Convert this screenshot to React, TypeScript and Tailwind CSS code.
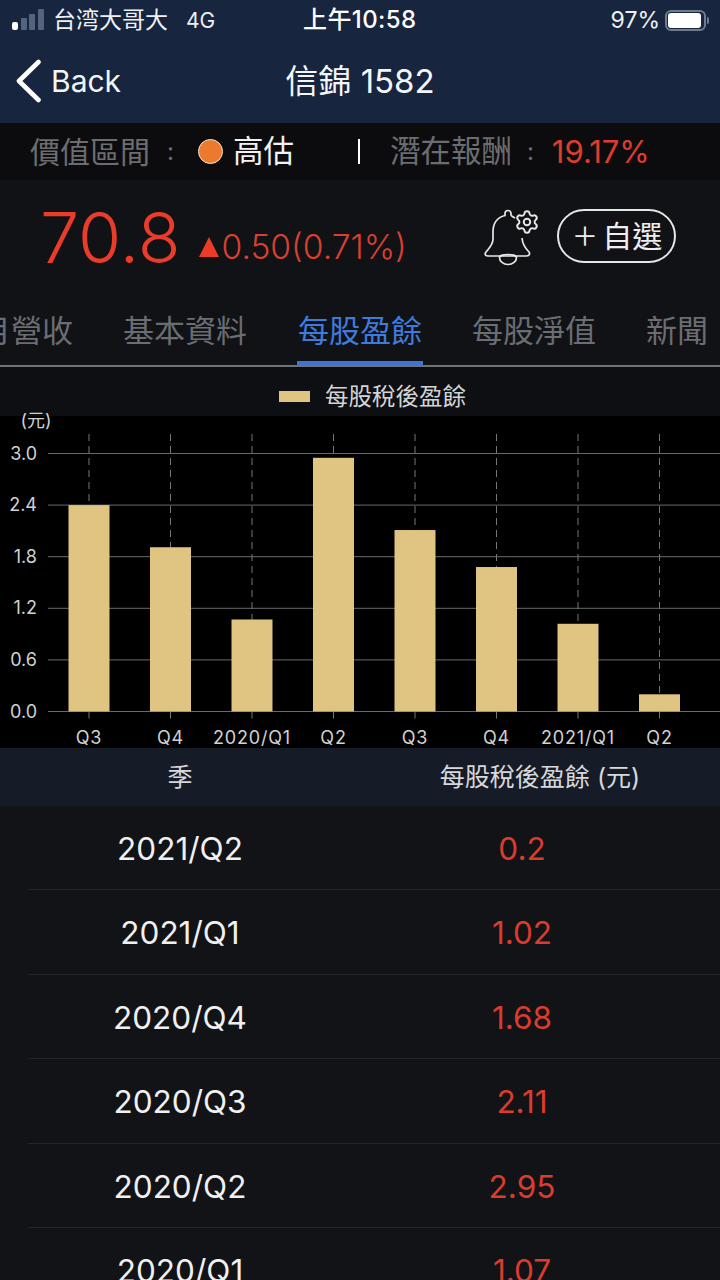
import React from "react";
import { Settings } from "lucide-react";

const FONT = 'Inter, "Noto Sans CJK TC", sans-serif';

const bars = [
  { label: "Q3", x: 89, value: 2.4 },
  { label: "Q4", x: 170.5, value: 1.91 },
  { label: "2020/Q1", x: 252, value: 1.07 },
  { label: "Q2", x: 333.5, value: 2.95 },
  { label: "Q3", x: 415, value: 2.11 },
  { label: "Q4", x: 496.5, value: 1.68 },
  { label: "2021/Q1", x: 578, value: 1.02 },
  { label: "Q2", x: 659.5, value: 0.2 },
];

const ticks = ["0.0", "0.6", "1.2", "1.8", "2.4", "3.0"];

const rows = [
  { season: "2021/Q2", eps: "0.2" },
  { season: "2021/Q1", eps: "1.02" },
  { season: "2020/Q4", eps: "1.68" },
  { season: "2020/Q3", eps: "2.11" },
  { season: "2020/Q2", eps: "2.95" },
  { season: "2020/Q1", eps: "1.07" },
];

const tabs = [
  { name: "月營收", className: "w-[73px] justify-end" },
  { name: "基本資料", className: "ml-[50px] w-[124px]" },
  { name: "每股盈餘", className: "ml-[50px] w-[126px]", active: true },
  { name: "每股淨值", className: "ml-[49px] w-[124px]" },
  { name: "新聞", className: "ml-[50px] w-[62px]" },
];

function Chart() {
  const top = 416;
  const zero = 711.5 - top;
  const unit = 86;
  return (
    <svg width="720" height="332" viewBox="0 0 720 332" className="block overflow-visible">
      <text x="36" y="11" textAnchor="middle" fontSize="18" fill="#d0d0d0">(元)</text>
      {ticks.map((t, i) => {
        const y = zero - i * 51.6;
        return (
          <g key={t}>
            <line x1="48" x2="720" y1={y} y2={y} stroke="#6a6a68" strokeWidth="1" />
            <text x="37" y={y + 6} textAnchor="end" fontSize="18" fill="#d2d2d2">{t}</text>
          </g>
        );
      })}
      {bars.map((b, i) => (
        <g key={i}>
          <line x1={b.x} x2={b.x} y1="18" y2={zero} stroke="#77777a" strokeDasharray="7 5" />
          <line x1={b.x} x2={b.x} y1={zero} y2={zero + 7} stroke="#77777a" />
          <rect x={b.x - 20.5} y={zero - b.value * unit} width="41" height={b.value * unit} fill="#e0c482" />
          <text x={b.x} y="328" textAnchor="middle" fontSize="18" letterSpacing="0.8" fill="#d2d2d2">{b.label}</text>
        </g>
      ))}
    </svg>
  );
}

export default function App() {
  return (
    <div className="w-[720px] h-[1280px] overflow-hidden bg-[#111317] text-white" style={{ fontFamily: FONT }}>
      {/* Status + nav */}
      <div className="h-[123px] bg-[#17253f]">
        <div className="relative h-[40px] flex items-center pl-[12px] pr-[11px]">
          <div className="flex items-end gap-[2.5px] h-[21px] mt-[-2px]">
            <span className="w-[6px] h-[8px] rounded-[2px] bg-white" />
            <span className="w-[6px] h-[12px] rounded-[1px] bg-[#55647d]" />
            <span className="w-[6px] h-[16px] rounded-[1px] bg-[#55647d]" />
            <span className="w-[6px] h-[21px] rounded-[1px] bg-[#55647d]" />
          </div>
          <span className="ml-[9.5px] text-[23px] leading-none text-[#eef0f3]">台湾大哥大</span>
          <span className="ml-[18px] text-[21px] leading-none text-[#eef0f3]">4G</span>
          <span className="absolute left-[303px] top-[9px] text-[24px] leading-[22px] font-medium tracking-[0.4px]">上午10:58</span>
          <span className="ml-auto text-[23px] leading-none text-[#eef0f3]">97%</span>
          <div className="ml-[5px] flex items-center">
            <div className="w-[41px] h-[21px] rounded-[6px] border-2 border-[#6f7b8f] p-[1px]">
              <div className="w-[33px] h-full rounded-[3px] bg-white" />
            </div>
            <div className="ml-[1px] w-[2px] h-[7px] rounded-r-sm bg-[#6f7b8f]" />
          </div>
        </div>
        <div className="relative h-[82px] flex items-center">
          <svg width="26" height="44" viewBox="0 0 26 44" fill="none" stroke="white" strokeWidth="4.6" strokeLinecap="round" strokeLinejoin="round" className="ml-[16px]">
            <path d="M22.5 3 L3 22 L22.5 41" />
          </svg>
          <span className="ml-[9px] text-[30px] leading-none text-[#f4f5f7]">Back</span>
          <span className="absolute left-0 right-0 text-center text-[33px] leading-none text-[#f4f5f7]">信錦 1582</span>
        </div>
      </div>

      {/* Valuation band */}
      <div className="h-[57px] bg-[#0c0c0e] flex items-center pl-[30px]">
        <span className="text-[30px] leading-none text-[#6c6d70] w-[137px]">價值區間</span>
        <span className="text-[24px] leading-none text-[#6c6d70]">:</span>
        <span className="ml-[24px] w-[25px] h-[25px] rounded-full bg-[#ec7a2e] border border-[#f5e3d2]" />
        <span className="ml-[10px] text-[30.5px] leading-none text-[#f2f2f2]">高估</span>
        <span className="ml-[64px] w-[2px] h-[25px] bg-white" />
        <span className="ml-[30px] text-[30.5px] leading-none text-[#6c6d70] w-[122px]">潛在報酬</span>
        <span className="ml-[15px] text-[24px] leading-none text-[#6c6d70]">:</span>
        <span className="ml-[18px] text-[31px] leading-none text-[#e03c2e]">19.17%</span>
      </div>

      {/* Price row */}
      <div className="h-[116px] bg-[#111216] flex items-center">
        <span className="ml-[40px] text-[70px] leading-none font-light text-[#ea3c28]">70.8</span>
        <span className="ml-[18px] mt-[18px] flex items-center">
          <span className="w-0 h-0 border-l-[10px] border-r-[10px] border-b-[20px] border-l-transparent border-r-transparent border-b-[#ea3c28]" />
          <span className="ml-[3px] text-[33.6px] leading-none font-light text-[#d8402f]">0.50(0.71%)</span>
        </span>
        <svg width="56" height="56" viewBox="0 0 56 56" className="ml-auto overflow-visible text-[#e8e8e8]" fill="none" stroke="currentColor" strokeWidth="1.7">
          <path d="M31 8 C29 6.5 27 6 27 5 L27 3.5 a3 3 0 0 0 -6 0 L21 5.5 C13 7.5 9 14 9 22 L9 29 C9 35 5 38 2 42 C0 44.5 2 46 4 46 L42 46 C45 46 46.5 44 45 42 C41 38 38.5 34 38 28" />
          <path d="M15.5 47.5 a8.5 7 0 0 0 17 0 a8.5 3 0 0 0 -17 0 Z" />
          <Settings x={30} y={-1} width={26} height={26} strokeWidth={1.8} />
        </svg>
        <div className="ml-[17px] mr-[44px] mt-[-4px] w-[119px] h-[54px] rounded-full border-2 border-[#e6e6e6] flex items-center justify-center text-[30px] leading-none text-[#eeeeee]">
          <span className="text-[44px] leading-none font-extralight mr-[3px] mt-[-6px]">+</span>
          <span>自選</span>
        </div>
      </div>

      {/* Tabs */}
      <div className="relative h-[71px] bg-[#111216] border-b-2 border-[#6f7276] overflow-hidden">
        <div className="flex w-[800px] h-[69px]">
          {tabs.map((t) => (
            <div
              key={t.name}
              className={`flex shrink-0 items-center justify-center overflow-hidden text-[31px] leading-none ${t.className} ${t.active ? "text-[#3f7bdc]" : "text-[#6a6d72]"}`}
            >
              <span className="whitespace-nowrap">{t.name}</span>
            </div>
          ))}
        </div>
        <span className="absolute left-[297px] bottom-0 w-[126px] h-[4px] bg-[#3f74d6]" />
      </div>

      {/* Legend */}
      <div className="h-[49px] bg-[#0e0f12] flex items-center justify-center pt-[10px] pl-[25px]">
        <span className="w-[31px] h-[11px] bg-[#e0c482]" />
        <span className="ml-[15px] text-[23.5px] leading-none text-[#d4d4d6]">每股稅後盈餘</span>
      </div>

      {/* Chart */}
      <div className="h-[332px] bg-black">
        <Chart />
      </div>

      {/* Table */}
      <div className="h-[58px] bg-[#161c27] grid grid-cols-[360px_360px] items-center text-[25px] leading-none text-[#d6d8db]">
        <span className="text-center">季</span>
        <span className="text-center">每股稅後盈餘 (元)</span>
      </div>
      <div>
        {rows.map((r) => (
          <div key={r.season} className="ml-[28px] h-[84.4px] pt-[2px] border-b border-[#24262b] flex items-center text-[31.5px] leading-none">
            <span className="w-[304px] text-center text-[#f0f0f0]">{r.season}</span>
            <span className="w-[380px] text-center text-[#dc3c2b]">{r.eps}</span>
          </div>
        ))}
      </div>
    </div>
  );
}
